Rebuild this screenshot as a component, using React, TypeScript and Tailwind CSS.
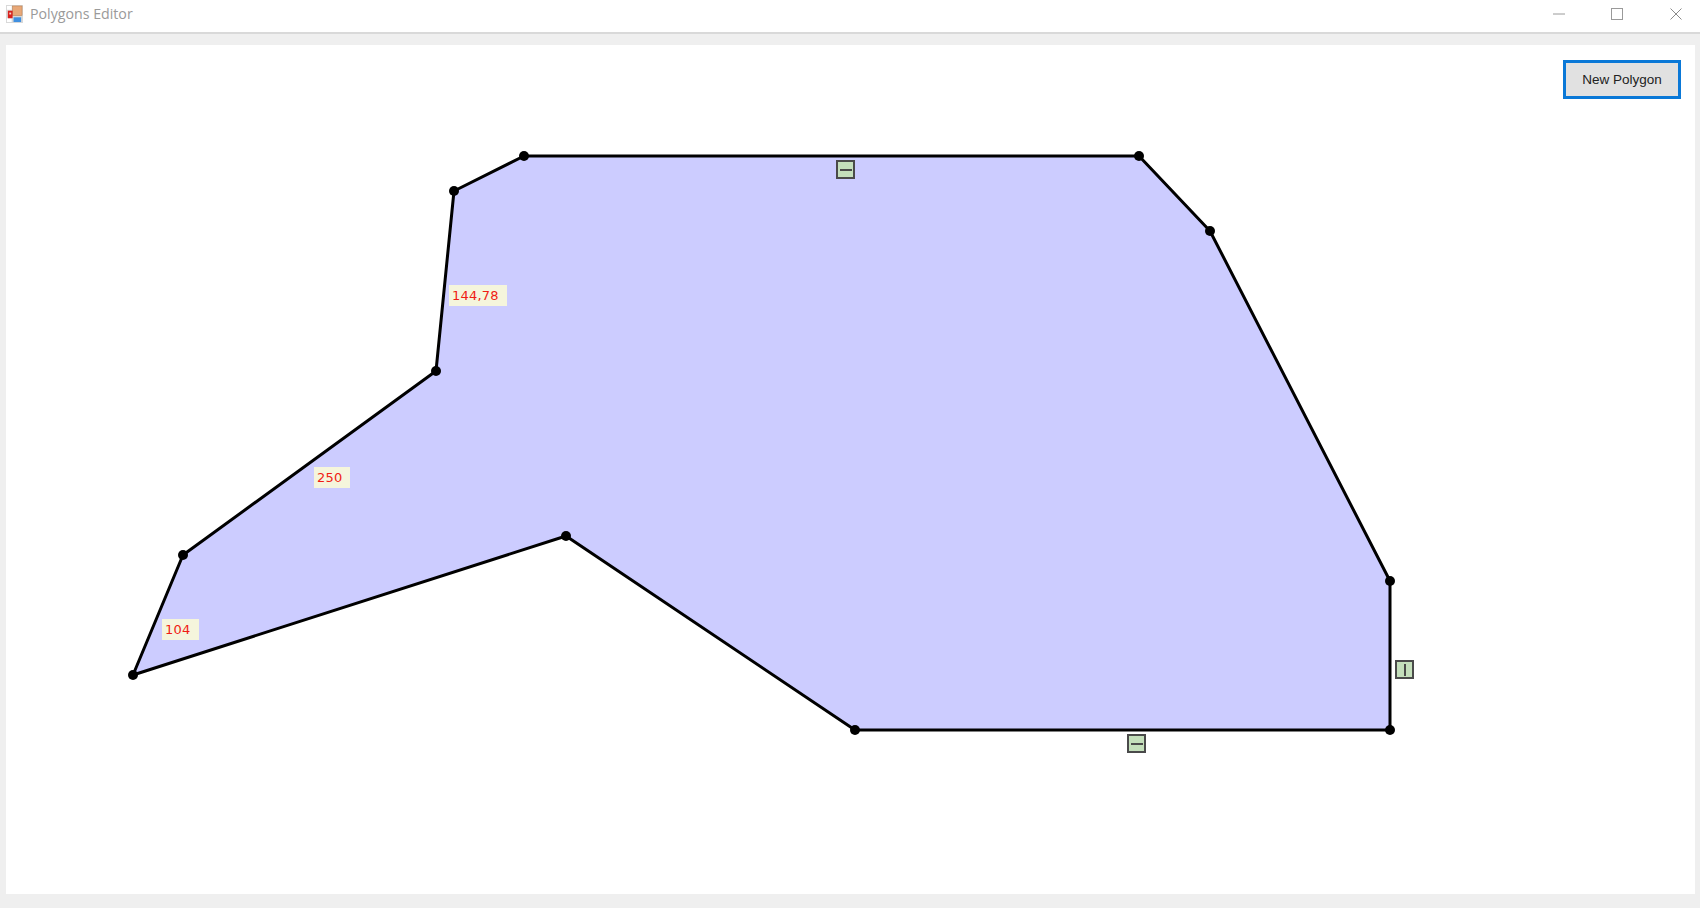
const pts = "524,156 1139,156 1210,231 1390,581 1390,730 855,730 566,536 133,675 183,555 436,371 454,191";
const dots = pts.split(" ").map((p) => p.split(",").map(Number));

function Marker({ x, y, vertical }: { x: number; y: number; vertical?: boolean }) {
  return (
    <div
      className="absolute flex h-[19px] w-[19px] items-center justify-center border-2 border-[#4a4a4a] bg-[#c4dfbb]"
      style={{ left: x - 6, top: y - 45 }}
    >
      <div className={vertical ? "h-[12px] w-[2px] bg-[#4a4a4a]" : "h-[2px] w-[12px] bg-[#4a4a4a]"} />
    </div>
  );
}

function Label({ x, y, w, children }: { x: number; y: number; w: number; children: string }) {
  return (
    <div
      className="absolute flex h-[21px] items-center bg-[#f5f5dc] pl-[3px] font-['DejaVu_Sans',sans-serif] text-[13px] leading-none tracking-[0.2px] text-[#f01c14]"
      style={{ left: x - 6, top: y - 45, width: w }}
    >
      {children}
    </div>
  );
}

export default function App() {
  return (
    <div className="flex h-[908px] w-[1700px] flex-col overflow-hidden bg-[#efefef]">
      <header className="flex h-[34px] shrink-0 items-center border-b-2 border-[#d9d9d9] bg-white pb-[4px]">
        <svg className="ml-[6px] h-[18px] w-[17px]" viewBox="0 0 18 19">
          <rect width="18" height="19" fill="#d8d8d8" />
          <rect x="1" y="1" width="5" height="4" fill="#fff" />
          <rect x="1" y="14" width="5" height="4" fill="#fff" />
          <rect x="7" y="1" width="10" height="10" fill="#e8a878" stroke="#b97f50" strokeWidth="0.6" />
          <rect x="2" y="6" width="5" height="8" fill="#d8201c" />
          <rect x="3.5" y="8" width="2" height="2" fill="#f5d5c8" />
          <rect x="8" y="13" width="8" height="5" fill="#3f8fe0" />
        </svg>
        <span className="ml-[7px] font-['Open_Sans',sans-serif] text-[14.2px] leading-none text-[#9a9a9a]">Polygons Editor</span>
        <div className="ml-auto flex items-center">
          <svg className="mr-[46px] h-[12px] w-[12px]" viewBox="0 0 12 12">
            <path d="M0 6H12" stroke="#9a9a9a" strokeWidth="1" />
          </svg>
          <svg className="mr-[47px] h-[12px] w-[12px]" viewBox="0 0 12 12">
            <rect x="0.5" y="0.5" width="11" height="11" fill="none" stroke="#9a9a9a" />
          </svg>
          <svg className="mr-[18px] h-[12px] w-[12px]" viewBox="0 0 12 12">
            <path d="M0.5 0.5L11.5 11.5M11.5 0.5L0.5 11.5" stroke="#8a8a8a" strokeWidth="1" />
          </svg>
        </div>
      </header>
      <main className="relative ml-[6px] mr-[5px] mt-[11px] flex h-[849px] justify-end bg-white pr-[14px] pt-[15px]">
        <svg className="absolute left-0 top-0 h-[849px] w-[1689px] blur-[0.4px]" viewBox="6 45 1689 849">
          <polygon points={pts} fill="#ccccff" stroke="#000000" strokeWidth="3" strokeLinejoin="round" />
          {dots.map(([x, y]) => (
            <circle key={`${x}-${y}`} cx={x} cy={y} r="5" fill="#000000" />
          ))}
        </svg>
        <Label x={449} y={285} w={58}>144,78</Label>
        <Label x={314} y={467} w={36}>250</Label>
        <Label x={162} y={619} w={37}>104</Label>
        <Marker x={836} y={160} />
        <Marker x={1127} y={734} />
        <Marker x={1395} y={660} vertical />
        <button className="relative h-[39px] w-[118px] border-[3px] border-[#0a78d7] bg-[#e1e1e1] pt-[1px] font-['Liberation_Sans',sans-serif] text-[13.5px] leading-none text-[#222222]">
          New Polygon
        </button>
      </main>
    </div>
  );
}
